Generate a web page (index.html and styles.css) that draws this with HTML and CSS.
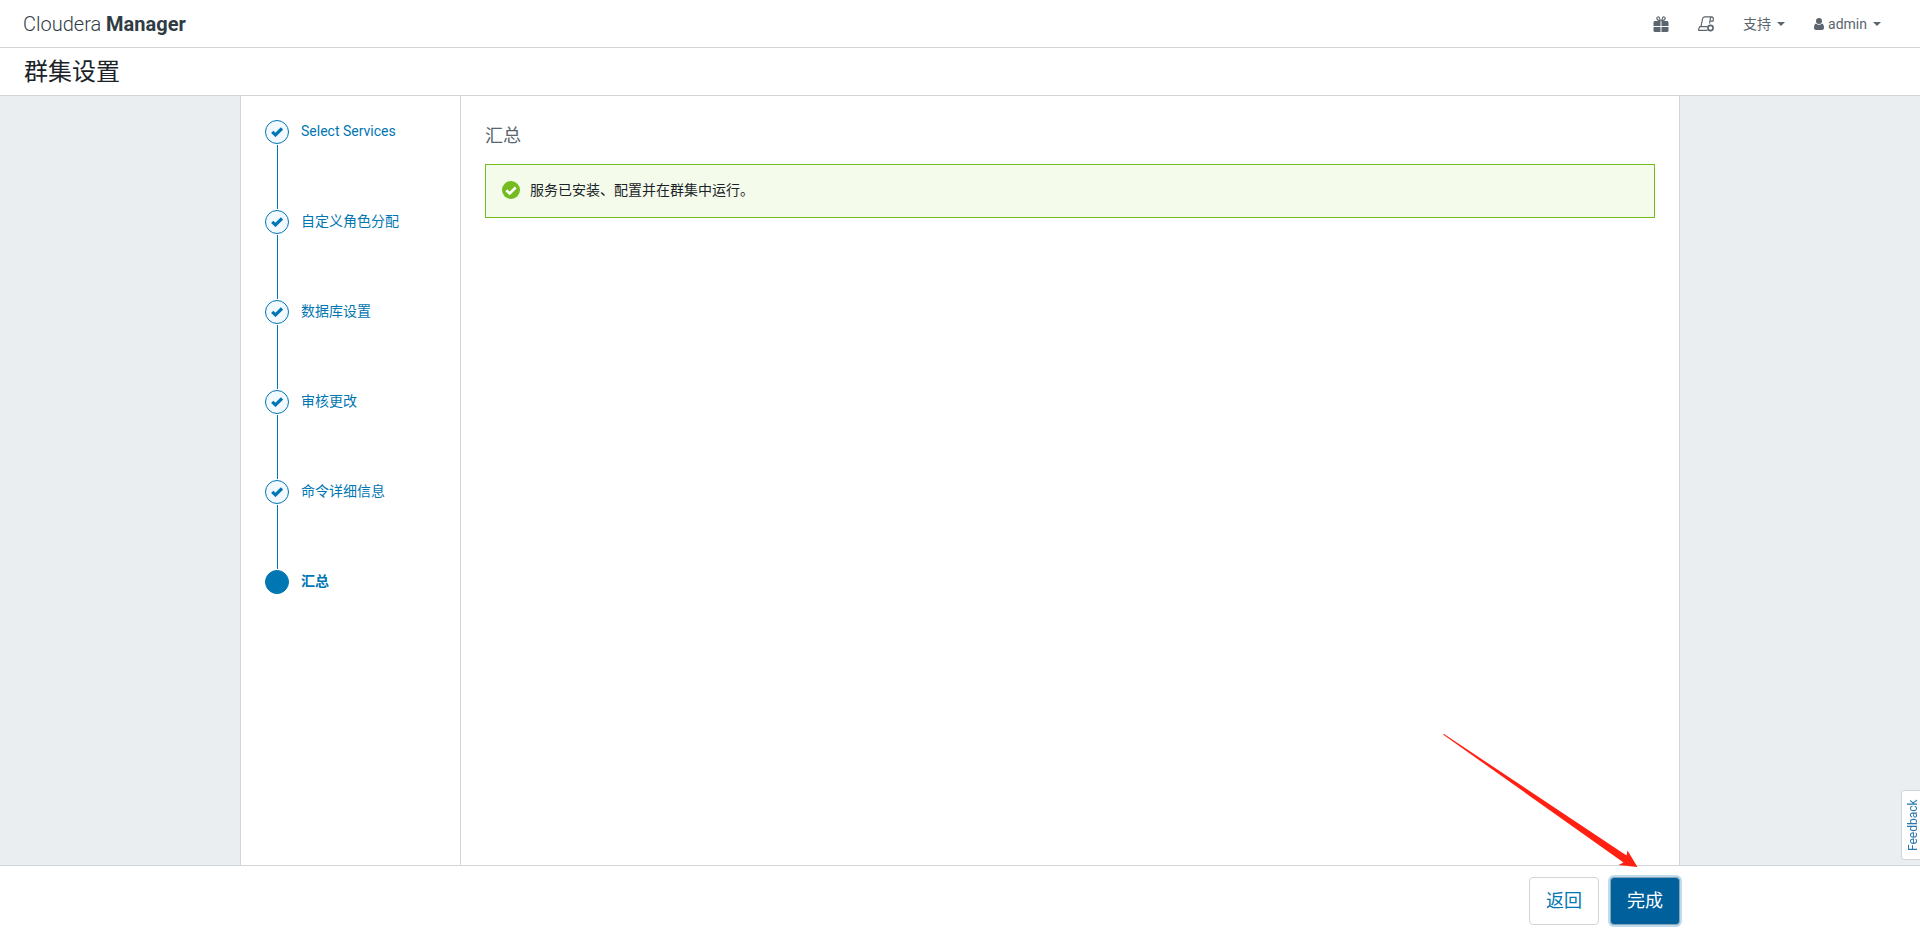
FILE: index.html
```html
<!DOCTYPE html>
<html lang="zh-CN">
<head>
<meta charset="utf-8">
<title>群集设置 - Cloudera Manager</title>
<link rel="stylesheet" href="styles.css">
</head>
<body>
<svg class="defs" aria-hidden="true">
  <symbol id="check" viewBox="0 0 12 10"><path d="M1.200 4.800 4.500 7.900 11 1.500" fill="none" stroke="currentColor" stroke-width="3.200"/></symbol>
  <symbol id="caret" viewBox="0 0 8 4"><path d="M0 0h8L4 4z" fill="currentColor"/></symbol>
</svg>
<header class="navbar">
  <a class="brand" href="#">Cloudera <b>Manager</b></a>
  <nav class="nav">
    <a class="nav-item" href="#" aria-label="新增功能">
      <svg class="nav-icon" viewBox="0 0 16 16"><path d="M1.500 5H7.500v5H.500V6zM8.500 5H14.500l1 1v4h-7zM.500 11h7v5H1.500l-1-1zM8.500 11h7v4l-1 1h-6z" fill="currentColor"/><path d="M7.500 5 6.300 1.600C5.700.4 3.600.8 3.800 2.400 3.900 3.800 5.500 4.500 7.500 4.800M8.500 5l1.200-3.400C10.300.4 12.400.8 12.200 2.400 12.100 3.800 10.500 4.500 8.500 4.800" fill="none" stroke="currentColor" stroke-width="1.100"/></svg>
    </a>
    <a class="nav-item" href="#" aria-label="运行的命令">
      <svg class="nav-icon" viewBox="0 0 16 16"><g fill="none" stroke="currentColor" stroke-width="1.200"><path d="M3 10.500 4.500 3C4.800 1.400 5.300.8 6.500.8h7C15 .8 15.500 2 15.300 3.500L15 5.200h-2.500M13.500.8C12.500 1 12.300 2 12.200 3L11.600 7.500"/><path d="M9.500 10.600H1.800C.8 12 .5 13.200.8 14.400h8.700"/></g><circle cx="12.500" cy="12" r="2.600" fill="none" stroke="currentColor" stroke-width="1.600"/></svg>
    </a>
    <a class="nav-item" href="#">支持<svg class="caret"><use href="#caret"/></svg></a>
    <a class="nav-item" href="#"><svg class="user" viewBox="0 0 10 12"><circle cx="5" cy="3" r="3" fill="currentColor"/><path d="M2 5.500C.6 6 0 7.600 0 9.500 0 11.200.8 12 2 12h6c1.200 0 2-.8 2-2.500C10 7.600 9.400 6 8 5.500 6.400 7.200 3.600 7.200 2 5.500z" fill="currentColor"/></svg>admin<svg class="caret"><use href="#caret"/></svg></a>
  </nav>
</header>
<div class="title-bar"><h1 class="title">群集设置</h1></div>
<div class="page">
  <div class="wizard">
    <ol class="steps">
      <li class="step"><span class="dot"><svg class="tick"><use href="#check"/></svg></span><a href="#">Select Services</a></li>
      <li class="step"><span class="dot"><svg class="tick"><use href="#check"/></svg></span><a href="#">自定义角色分配</a></li>
      <li class="step"><span class="dot"><svg class="tick"><use href="#check"/></svg></span><a href="#">数据库设置</a></li>
      <li class="step"><span class="dot"><svg class="tick"><use href="#check"/></svg></span><a href="#">审核更改</a></li>
      <li class="step"><span class="dot"><svg class="tick"><use href="#check"/></svg></span><a href="#">命令详细信息</a></li>
      <li class="step current"><span class="dot"></span><a href="#" aria-current="step">汇总</a></li>
    </ol>
    <main class="content">
      <h2 class="subtitle">汇总</h2>
      <div class="alert" role="status">
        <svg class="alert-icon" viewBox="0 0 18 18"><circle cx="9" cy="9" r="9" fill="#74bc1f"/><path d="m4.300 9.200 3.400 3.300 6-6" fill="none" stroke="#fff" stroke-width="2.600"/></svg>
        <span>服务已安装、配置并在群集中运行。</span>
      </div>
    </main>
  </div>
</div>
<footer class="footer">
  <div class="actions">
    <button class="btn" type="button">返回</button>
    <button class="btn primary" type="button">完成</button>
    <svg class="arrow" viewBox="0 0 196 134" aria-hidden="true"><path d="M1 .5 2 0 184.500 121.500 185.500 116.500 195.500 133 176.500 131 181.500 128.500z" fill="#ff2012"/></svg>
  </div>
</footer>
<button class="feedback" type="button">Feedback</button>
</body>
</html>
```

FILE: styles.css
```css
* { box-sizing: border-box; }

body {
  margin: 0;
  min-height: 100vh;
  display: flex;
  flex-direction: column;
  background: #fff;
  color: #1b2329;
  font: 14px/20px Roboto, "Noto Sans CJK SC", sans-serif;
}

a { color: inherit; text-decoration: none; }

.defs { position: absolute; width: 0; height: 0; }

.navbar {
  display: flex;
  align-items: center;
  justify-content: space-between;
  height: 48px;
  padding: 0 39px 0 23px;
  border-bottom: 1px solid #d2d5d9;
}

.brand { color: #2f3c45; font-size: 20px; line-height: 24px; font-weight: 300; }
.brand b { font-weight: 700; }

.nav { display: flex; align-items: center; gap: 29px; color: #5a656d; }
.nav-item { display: flex; align-items: center; }
.nav-icon { width: 16px; height: 16px; }
.caret { width: 8px; height: 4px; margin-left: 6px; }
.user { width: 10px; height: 12px; margin-right: 4px; }

.title-bar {
  height: 48px;
  padding: 0 24px;
  border-bottom: 1px solid #d2d5d9;
}
.title { margin: 0; font-size: 24px; line-height: 48px; font-weight: 400; }

.page { flex: 1; display: flex; justify-content: center; background: #eaeef1; }

.wizard {
  display: flex;
  width: 75%;
  background: #fff;
  border: solid #d2d5d9;
  border-width: 0 1px;
}

.steps {
  flex: none;
  width: 220px;
  margin: 0;
  padding: 24px;
  list-style: none;
  border-right: 1px solid #d2d5d9;
  color: #0076b3;
}
.step {
  display: grid;
  grid-template-columns: 24px 1fr;
  grid-template-rows: 24px 64px;
  gap: 1px 12px;
  padding-bottom: 1px;
}
.step a { line-height: 22px; }
.step::after {
  content: "";
  width: 1px;
  margin-left: 12px;
  background: #0076b3;
}
.step:last-child::after { display: none; }

.dot {
  display: flex;
  align-items: center;
  justify-content: center;
  border: 1px solid #0076b3;
  border-radius: 50%;
  background: #f3faff;
}
.tick { width: 12px; height: 10px; }
.current { font-weight: 700; }
.current .dot { background: #0076b3; }

.content { flex: 1; padding: 24px; }
.subtitle {
  margin: 0 0 12px;
  color: #5a656d;
  font-size: 18px;
  line-height: 32px;
  font-weight: 400;
}

.alert {
  display: flex;
  align-items: center;
  gap: 10px;
  min-height: 54px;
  padding: 15px 16px 17px;
  border: 1px solid #74bc1f;
  background: #f4fbeb;
}
.alert-icon { width: 18px; height: 18px; }

.footer {
  display: flex;
  justify-content: center;
  height: 72px;
  padding-top: 11px;
  border-top: 1px solid #d2d5d9;
}
.actions {
  position: relative;
  display: flex;
  justify-content: flex-end;
  gap: 11px;
  width: 75%;
}
.btn {
  height: 48px;
  padding: 0 16px;
  border: 1px solid #d2d5d9;
  border-radius: 4px;
  background: #fff;
  color: #0076b3;
  font: 18px/24px Roboto, "Noto Sans CJK SC", sans-serif;
}
.btn.primary {
  border-color: #8aa5b8;
  background: #00609c;
  color: #fff;
  box-shadow: 0 0 0 2px #bfdcec;
}

.arrow {
  position: absolute;
  right: 42px;
  bottom: 69px;
  width: 196px;
  height: 134px;
  pointer-events: none;
}

.feedback {
  position: fixed;
  right: 0;
  bottom: 77px;
  width: 19px;
  height: 70px;
  padding: 0 3px 0 0;
  border: 1px solid #d2d5d9;
  border-left-width: 0;
  border-radius: 0 3px 3px 0;
  background: #fff;
  color: #2878ae;
  font: 12px/16px Roboto, sans-serif;
  writing-mode: vertical-rl;
  transform: rotate(180deg);
}
```
